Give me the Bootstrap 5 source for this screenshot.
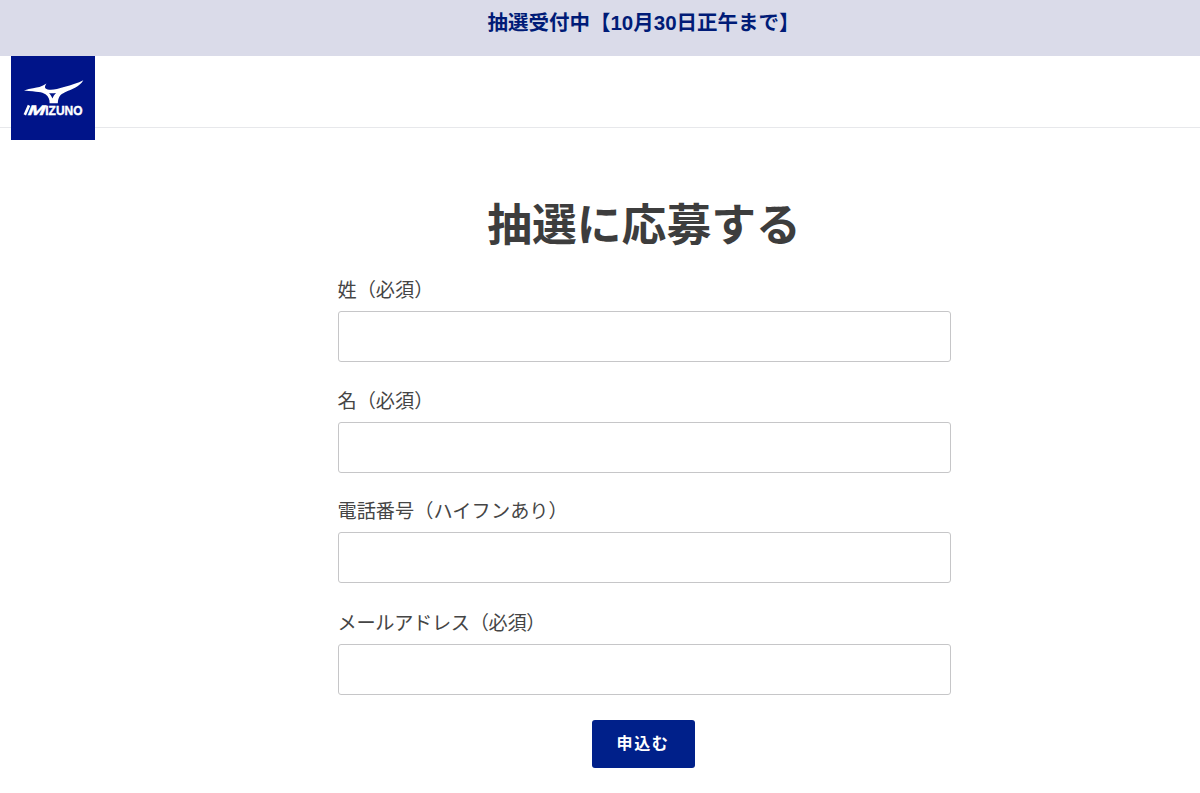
<!DOCTYPE html>
<html lang="ja">
<head>
  <meta charset="UTF-8" />
  <meta name="viewport" content="width=device-width, initial-scale=1" />
  <title>抽選に応募する</title>
  <link href="https://cdn.jsdelivr.net/npm/bootstrap@5.3.0/dist/css/bootstrap.min.css" rel="stylesheet" />
  <style>
    body {
      font-family: "Liberation Sans", "Noto Sans CJK JP", sans-serif;
      color: #3d3d3d;
      overflow: hidden;
    }
    .notice-bar {
      height: 56px;
      padding: 8px 0 0 87px;
      background-color: #dadbe9;
      color: #001b77;
      font-size: 20.5px;
      line-height: 30px;
    }
    .site-header {
      height: 72px;
      padding: 0 0 0 11px;
      border-bottom: 1px solid #e7e8eb;
    }
    .brand-logo {
      width: 84px;
      height: 84px;
    }
    .entry-main {
      padding: 65px 0 0 88px;
    }
    .entry-title {
      font-size: 44.8px;
      line-height: 64px;
      margin-bottom: 20px;
    }
    .entry-form {
      width: 613px;
    }
    .entry-field {
      margin-bottom: 25.6px;
    }
    .form-label {
      display: block;
      font-size: 19.2px;
      line-height: 28px;
      margin-bottom: 6px;
      color: #454545;
    }
    .label-kana {
      padding-top: 1px;
      letter-spacing: -.3px;
    }
    .form-control {
      height: 51px;
      border: 1px solid #c6c6c8;
      border-radius: 3px;
    }
    .btn-entry {
      --bs-btn-color: #fff;
      --bs-btn-bg: #00208a;
      --bs-btn-hover-color: #fff;
      --bs-btn-hover-bg: #001a70;
      width: 103px;
      height: 48px;
      margin-right: 2px;
      border: 0;
      border-radius: 3px;
      font-size: 16px;
      letter-spacing: 1.6px;
    }
  </style>
</head>
<body>
  <div class="notice-bar text-center fw-bold">抽選受付中【10月30日正午まで】</div>
  <header class="site-header d-flex align-items-start">
    <a href="#" class="d-block lh-1">
      <svg class="brand-logo d-block" viewBox="0 0 84 84" role="img" aria-label="Mizuno">
        <rect width="84" height="84" fill="#001489" />
        <path fill="#fff" fill-rule="evenodd" d="M13 34.4 C20 32.4 25 31.6 28.5 31 C31 30 33 28.7 35.5 27.4 C34 29.7 33.4 31.2 34.6 32.4 C37 34.6 45 33.9 53 31.1 C61 28.8 67 26.9 72.3 24.2 C69 30.5 61 33 54 36.2 C49 38.5 47.2 41 46.8 47.2 L38.6 47.2 C38.8 43.2 37.5 40.6 34.5 38.2 C30.5 35.6 27 35.8 13 34.4 Z M38 37.2 C39.4 38.6 40.6 40.4 41.4 42.4 C42.2 40.4 43.4 38.6 45 37 C43 37.4 40 37.5 38 37.2 Z" />
        <g fill="#fff" stroke="#fff" stroke-width=".4" font-family="Liberation Sans, sans-serif" font-weight="700">
          <text transform="translate(15.8 58.9) skewX(-22)" font-size="13.8" textLength="17" lengthAdjust="spacingAndGlyphs">M</text>
          <text x="34.3" y="58.9" font-size="13" textLength="37.2" lengthAdjust="spacingAndGlyphs">IZUNO</text>
        </g>
        <path stroke="#fff" stroke-width="2.6" d="M13.8 58.9 L18 49.4" />
      </svg>
    </a>
  </header>
  <main class="entry-main d-flex flex-column align-items-center">
    <h1 class="entry-title fw-bold">抽選に応募する</h1>
    <form class="entry-form">
      <div class="entry-field">
        <label for="last-name" class="form-label">姓（必須）</label>
        <input type="text" id="last-name" class="form-control" />
      </div>
      <div class="entry-field">
        <label for="first-name" class="form-label">名（必須）</label>
        <input type="text" id="first-name" class="form-control" />
      </div>
      <div class="entry-field">
        <label for="tel" class="form-label">電話番号（ハイフンあり）</label>
        <input type="tel" id="tel" class="form-control" />
      </div>
      <div class="entry-field">
        <label for="email" class="form-label label-kana">メールアドレス（必須）</label>
        <input type="email" id="email" class="form-control" />
      </div>
      <div class="text-center">
        <button type="button" class="btn btn-entry fw-bold">申込む</button>
      </div>
    </form>
  </main>
  <script src="https://cdn.jsdelivr.net/npm/bootstrap@5.3.0/dist/js/bootstrap.bundle.min.js"></script>
</body>
</html>
